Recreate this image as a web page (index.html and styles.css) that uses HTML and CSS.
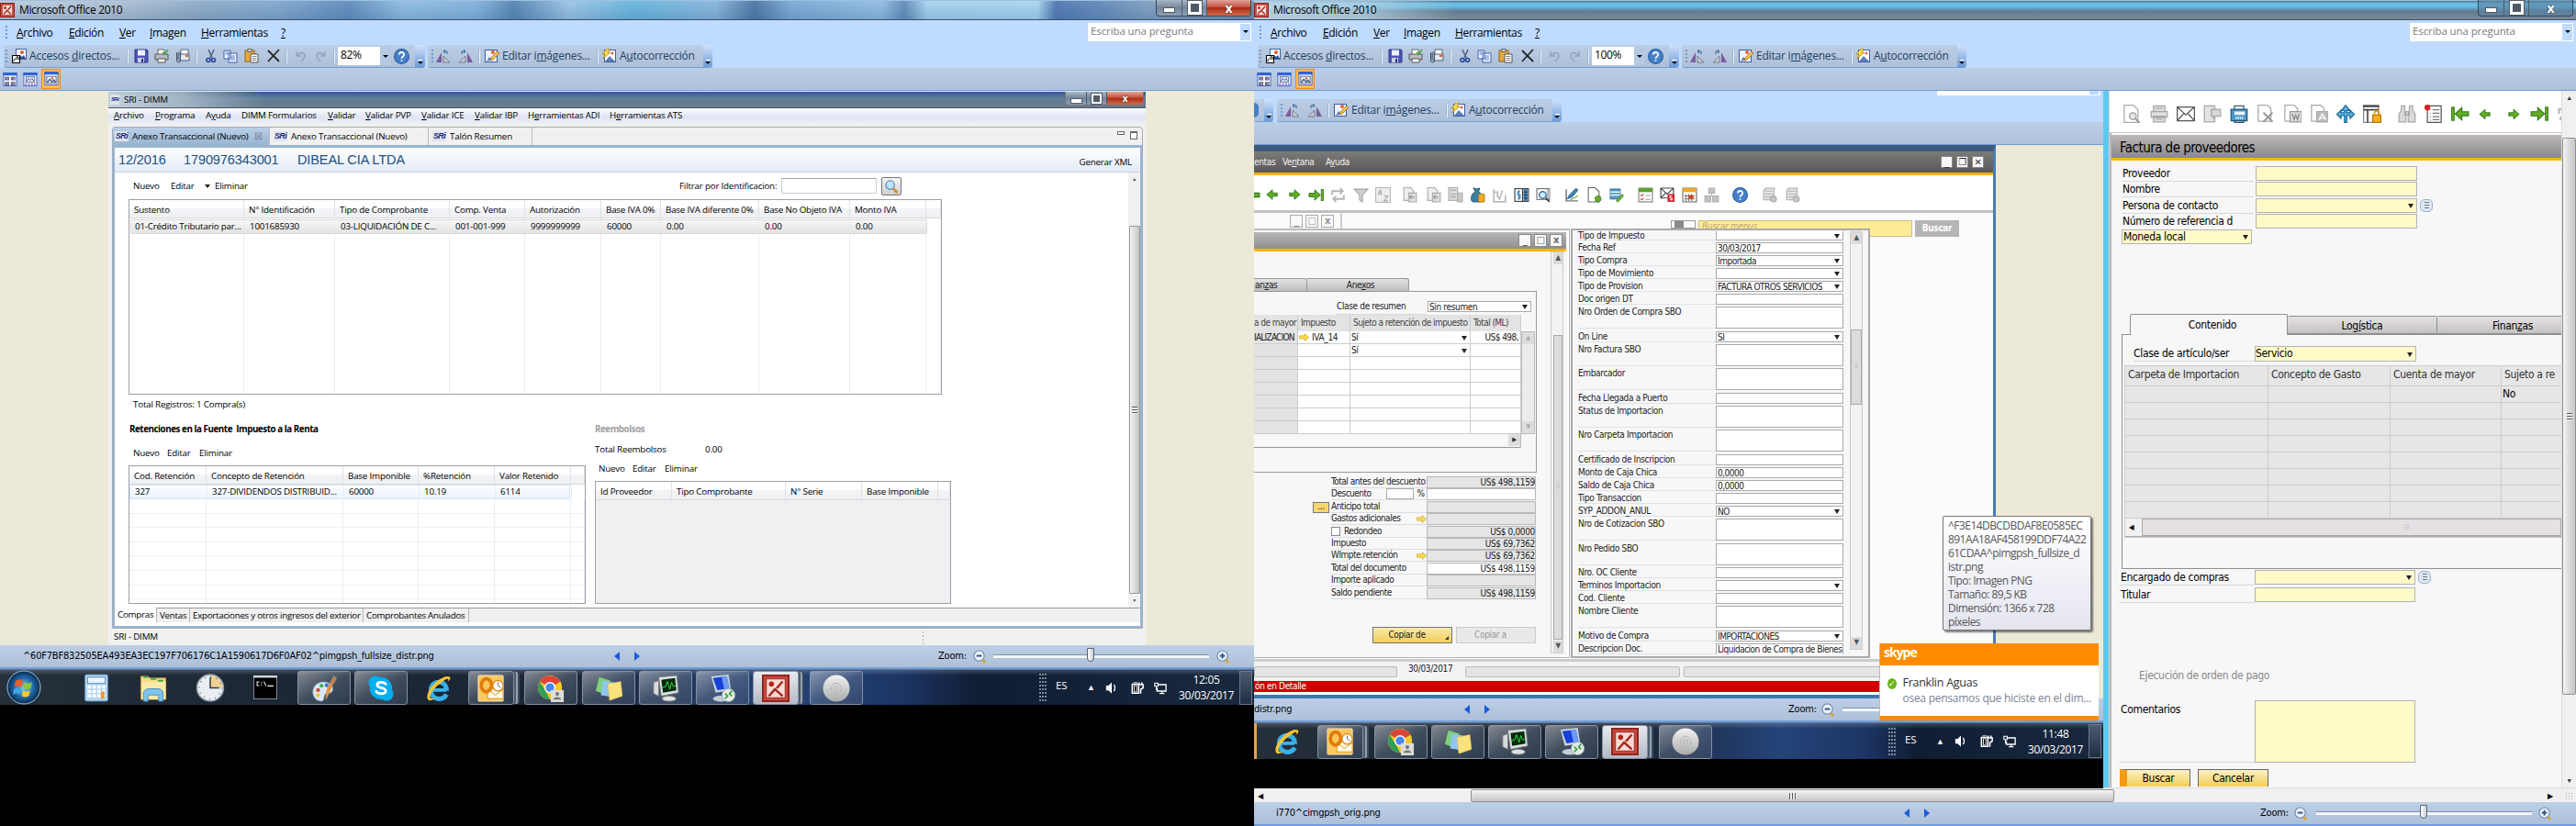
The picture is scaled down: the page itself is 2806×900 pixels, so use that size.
FILE: index.html
```html
<!DOCTYPE html>
<html lang="es">
<head>
<meta charset="utf-8">
<title>Microsoft Office 2010</title>
<link rel="stylesheet" href="styles.css">
</head>
<body>
<svg class="defs" width="0" height="0">
<defs>
<linearGradient id="gDisc" x1="0" y1="0" x2="0" y2="1"><stop offset="0" stop-color="#f2f2f2"/><stop offset="1" stop-color="#a9abab"/></linearGradient>
<radialGradient id="gOrb"><stop offset="0" stop-color="#7fd0f5"/><stop offset=".6" stop-color="#1f66a5"/><stop offset="1" stop-color="#0b2a4d"/></radialGradient>
<symbol id="app" viewBox="0 0 16 16"><rect x=".5" y=".5" width="15" height="15" fill="#c8493e" stroke="#8d241c"/><rect x="2.500" y="2.500" width="11" height="11" fill="#f7dcd6" stroke="#a5352b" stroke-width=".6"/><path d="M4 12.500l3.500-4 4.500 4M12 4L8.500 8" stroke="#a3261c" stroke-width="1.300" fill="none"/><circle cx="5.500" cy="5.500" r="1.500" fill="#b3261c"/></symbol>
<symbol id="short" viewBox="0 0 16 16"><rect x="4.500" y=".5" width="11" height="11" fill="#fff" stroke="#3d5fa3"/><circle cx="11" cy="4" r="2" fill="#e4562d"/><path d="M6 11l3-4 2 2 2-2 2 4z" fill="#31528e"/><rect x=".5" y="7.500" width="8" height="8" fill="#fff" stroke="#000"/><path d="M2 14c0-3 1-3 4-3M4.500 9H7v3" stroke="#000" fill="none"/></symbol>
<symbol id="save" viewBox="0 0 16 16"><path d="M1 1h13l1 1v13H1z" fill="#4a57b5" stroke="#2c3787"/><rect x="4" y="1.500" width="8" height="6" fill="#eef1fb"/><rect x="4" y="10" width="7" height="5" fill="#c9cfdf"/><rect x="8" y="11" width="2" height="4" fill="#2b357e"/></symbol>
<symbol id="print" viewBox="0 0 16 16"><path d="M4 1h7v6H4z" fill="#fff" stroke="#666"/><path d="M1 6h14v6H1z" fill="#b9bcc2" stroke="#555"/><path d="M4 11h8v4H4z" fill="#fff" stroke="#555"/><path d="M9 4l2 2 4-5" stroke="#3fa535" stroke-width="1.600" fill="none"/></symbol>
<symbol id="mail" viewBox="0 0 16 16"><path d="M6 1h8v11H6z" fill="#fff" stroke="#54627a"/><path d="M4 6h11v7H4z" fill="#dfe8f4" stroke="#54627a"/><path d="M1.500 4v9a2 2 0 004 0V5a1.300 1.300 0 00-2.500 0v7" stroke="#44516b" fill="none"/><rect x="11" y="7" width="3" height="2" fill="#d9652f"/></symbol>
<symbol id="cut" viewBox="0 0 16 16"><path d="M5 1l4 9M11 1l-4 9" stroke="#4f6181" stroke-width="1.500"/><circle cx="5" cy="12.500" r="2" fill="none" stroke="#24479b" stroke-width="1.600"/><circle cx="10.500" cy="12.500" r="2" fill="none" stroke="#24479b" stroke-width="1.600"/></symbol>
<symbol id="copy" viewBox="0 0 16 16"><path d="M1 2h7v9H1zM6 5h9v10H6z" fill="#f3f7ff" stroke="#3a5fae"/><path d="M2.500 4h4M2.500 6h3M8 8h5M8 10h5M8 12h5" stroke="#5b80c9"/></symbol>
<symbol id="paste" viewBox="0 0 16 16"><rect x="1" y="2" width="10" height="12" fill="#e7a93a" stroke="#8f651b"/><rect x="4" y=".5" width="4" height="3" fill="#dcdcdc" stroke="#666"/><path d="M7 6h8v9H7z" fill="#fff" stroke="#555"/><path d="M8.500 8.500h5M8.500 10.500h5M8.500 12.500h5" stroke="#888"/></symbol>
<symbol id="xx" viewBox="0 0 16 16"><path d="M2 2l12 12M14 1L2 14" stroke="#26282c" stroke-width="1.800"/></symbol>
<symbol id="undo" viewBox="0 0 16 16"><path d="M3 3v5h5M3 8c4-5 9-4 9 0 0 3-3 4-4 6" stroke="#95a5bb" stroke-width="1.600" fill="none"/></symbol>
<symbol id="redo" viewBox="0 0 16 16"><path d="M12 3v5H7M12 8C8 3 3 4 3 8c0 3 3 4 4 6" stroke="#95a5bb" stroke-width="1.600" fill="none"/></symbol>
<symbol id="help" viewBox="0 0 16 16"><circle cx="8" cy="8" r="7.500" fill="#4480c8" stroke="#2c5d9f"/><path d="M5.500 6.200C5.500 3 10.500 3 10.500 6c0 2-2.500 2-2.500 4.200M8 11.500v1.500" stroke="#fff" stroke-width="1.700" fill="none"/></symbol>
<symbol id="fv" viewBox="0 0 16 16"><path d="M6 4v11H0z" fill="#7a5c9f"/><path d="M8 8v7h7z" fill="#c9cbd6" stroke="#777d8d"/><path d="M8 3h4v3M10 1L8 3l2 2" stroke="#2d5c9b" fill="none"/></symbol>
<symbol id="fh" viewBox="0 0 16 16"><path d="M10 4v11h6z" fill="#7a5c9f"/><path d="M8 8v7H1z" fill="#c9cbd6" stroke="#777d8d"/><path d="M4 6V3h4M6 1l2 2-2 2" stroke="#2d5c9b" fill="none"/></symbol>
<symbol id="edit" viewBox="0 0 16 16"><rect x=".5" y="1.500" width="13" height="13" fill="#eef4ff" stroke="#3d5fa3"/><path d="M2 14l3-5 3 3" fill="#5e7fb8"/><circle cx="9" cy="4" r="2" fill="#e2622f"/><path d="M6 13l1-3 7-7 2 2-7 7z" fill="#f5c34d" stroke="#8a5b15" stroke-width=".7"/></symbol>
<symbol id="auto" viewBox="0 0 16 16"><rect x="2.500" y="1.500" width="12" height="13" fill="#fff" stroke="#3d5fa3"/><path d="M3 14l5-6 6 6z" fill="#5e7fb8"/><circle cx="11" cy="5" r="1.500" fill="#e2622f"/><path d="M5 0l3 0-2 4h3L1 11l2-5H0z" fill="#ffd84d" stroke="#a07a10" stroke-width=".7"/></symbol>
<symbol id="v1" viewBox="0 0 16 16"><rect x=".5" y=".5" width="15" height="15" fill="#fff" stroke="#3761c4"/><rect width="16" height="3.500" fill="#2f62d6"/><path d="M2 5h5v4H2zM9 5h5v4H9zM2 11h5v4H2zM9 11h5v4H9z" fill="#51658f"/><path d="M4 6h2v2H4zM11 6h2v2h-2zM4 12h2v2H4zM11 12h2v2h-2z" fill="#ea9070"/></symbol>
<symbol id="v2" viewBox="0 0 16 16"><rect x=".5" y=".5" width="15" height="15" fill="#fff" stroke="#3761c4"/><rect width="16" height="3.500" fill="#2f62d6"/><rect x="3" y="5" width="10" height="6" fill="#e9eefb" stroke="#51658f"/><path d="M4 10l2-3 2 2 2-2 2 3" stroke="#41557f" fill="none"/><path d="M2 13.500h12" stroke="#7b4cc0" stroke-width="2" stroke-dasharray="2 1.500"/></symbol>
<symbol id="v3" viewBox="0 0 16 16"><rect x=".5" y=".5" width="15" height="15" fill="#fff" stroke="#3761c4"/><rect width="16" height="3.500" fill="#2f62d6"/><rect x="2.500" y="5.500" width="11" height="8" fill="#e9eefb" stroke="#51658f"/><path d="M3 13l3-4 3 3 2-2 2 3" stroke="#41557f" fill="none" stroke-width="1.400"/><circle cx="9" cy="8" r="1.300" fill="#e2622f"/></symbol>
<symbol id="mag" viewBox="0 0 16 16"><circle cx="6.500" cy="6" r="5" fill="#bfe4fa" stroke="#5489b5" stroke-width="1.300"/><path d="M10 10l5 5" stroke="#d58a2f" stroke-width="3"/></symbol>
<symbol id="zm" viewBox="0 0 16 16"><circle cx="7" cy="7" r="6" fill="#eaf2fb" stroke="#6f87a8" stroke-width="1.200"/><path d="M4 7h6" stroke="#2b4f80" stroke-width="2"/><path d="M11 12l3 3" stroke="#d8a53a" stroke-width="3"/></symbol>
<symbol id="zp" viewBox="0 0 16 16"><circle cx="7" cy="7" r="6" fill="#eaf2fb" stroke="#6f87a8" stroke-width="1.200"/><path d="M4 7h6M7 4v6" stroke="#2b4f80" stroke-width="2"/><path d="M11 12l3 3" stroke="#d8a53a" stroke-width="3"/></symbol>
<symbol id="orb" viewBox="0 0 38 38"><circle cx="19" cy="19" r="18" fill="url(#gOrb)" stroke="#9cc4df"/><path d="M10 12c3-2 5-2 8 0l-1.500 7c-3-2-5-2-8 0z" fill="#ea5a28"/><path d="M20 13c3 2 5 2 8 0l-1.500 6.500c-3 2-5 2-8 0z" fill="#8bc53f"/><path d="M8 21c3-2 5-2 8 0l-1.500 6c-3-2-5-2-7.500 0z" fill="#3ea7e5"/><path d="M18 22c3 2 5 2 8 0l-1.500 6c-3 2-5 2-8 0z" fill="#fdca2e"/></symbol>
<symbol id="calc" viewBox="0 0 32 32"><rect x="3" y="1" width="26" height="30" rx="2" fill="#b6d6ef" stroke="#4b7fae"/><rect x="6" y="4" width="20" height="7" fill="#e9f5fd" stroke="#5d8cb5"/><path d="M6 15h20M6 20h20M6 25h20" stroke="#fff" stroke-width="3.500" stroke-dasharray="4 1.500"/><path d="M23 20v8" stroke="#ee9a2f" stroke-width="4"/></symbol>
<symbol id="folder" viewBox="0 0 32 32"><path d="M2 3h8l2 2h18v24H2z" fill="#f7dc85" stroke="#b9963d"/><path d="M3 9h27v20H3z" fill="#fbe9a8"/><path d="M5 4h5M13 6h6M21 8h6" stroke="#3ba64a" stroke-width="2"/><path d="M5 31V22c0-3 3-5 6-5h10c3 0 6 2 6 5v9h-5v-7H10v7z" fill="#7fc4ee" stroke="#468fbf"/></symbol>
<symbol id="clk" viewBox="0 0 32 32"><circle cx="16" cy="16" r="15" fill="#e9eef3" stroke="#8b98a5" stroke-width="1.500"/><path d="M16 16V2a14 14 0 0114 14z" fill="#f2cf92"/><path d="M16 4v12h10" stroke="#33404e" stroke-width="1.600" fill="none"/><circle cx="16" cy="16" r="12.500" fill="none" stroke="#5d6b79" stroke-width="1.500" stroke-dasharray="1 5.540"/></symbol>
<symbol id="cmd" viewBox="0 0 32 32"><rect x=".5" y=".5" width="31" height="31" fill="#000" stroke="#9aa4b0"/><rect width="32" height="3" fill="#cfd6de"/><path d="M8 8.500H5v5h3M11 9v1.500M11 12v1.500M14 8l3 6M19 14h8" stroke="#f4f4f4" stroke-width="1.300" fill="none"/></symbol>
<symbol id="paint" viewBox="0 0 32 32"><path d="M3 20c0-8 8-13 16-11 6 2 9 7 6 11-2 3-6 0-8 3-2 4 0 7-4 8C7 31 3 26 3 20z" fill="#dbe9f6" stroke="#7ea1c0"/><circle cx="9" cy="18" r="2.300" fill="#e03f32"/><circle cx="13" cy="13" r="2.300" fill="#4bb04a"/><circle cx="19" cy="12.500" r="2.300" fill="#3574d4"/><circle cx="9" cy="24" r="2.300" fill="#f2c230"/><path d="M27 1l4 3-5 9-4-2z" fill="#b58557"/><path d="M22 11l4 2-8 17c0-5-1-9 4-19z" fill="#e8913c"/></symbol>
<symbol id="skype" viewBox="0 0 32 32"><circle cx="16" cy="16" r="13" fill="#00aff0"/><circle cx="9.500" cy="9.500" r="8" fill="#00aff0"/><circle cx="22.500" cy="22.500" r="8" fill="#00aff0"/><path d="M21.500 11c-1.500-2.500-10-3-10 1 0 4.500 10 2 10 7 0 4.500-9.500 4-11 .5" stroke="#fff" stroke-width="3" fill="none" stroke-linecap="round"/></symbol>
<symbol id="ie" viewBox="0 0 32 32"><path d="M8.500 18h17" stroke="#38b5ee" stroke-width="4"/><path d="M26 23c-4 8-18 7-18-5S26 5 26 19" stroke="#35b0ea" stroke-width="5.500" fill="none"/><path d="M30 3c-5-4-20 6-25 17-2 5-2 9 1 10 3 0 6-1 8-3-13 5-6-9 4-16C25 5 29 3 28 8c1-1 3-3 2-5z" fill="#f6c433"/></symbol>
<symbol id="outlook" viewBox="0 0 32 32"><rect x="1" y="1" width="29" height="30" rx="1" fill="#f9c860" stroke="#fbe6b5"/><path d="M12 16h18v12H12z" fill="#fff8e4" stroke="#d9961e"/><path d="M12 17l9 7 9-7" stroke="#d9961e" fill="none"/><ellipse cx="10.500" cy="12.500" rx="6" ry="7.500" fill="none" stroke="#e07b09" stroke-width="4"/><circle cx="24" cy="13" r="6" fill="#fff" stroke="#e08e1a" stroke-width="1.500"/><path d="M24 9v4l3 2" stroke="#666" fill="none"/></symbol>
<symbol id="chrome" viewBox="0 0 32 32"><circle cx="15" cy="15" r="14" fill="#f7c927"/><path d="M15 15L3 8a14 14 0 0124 0z" fill="#dc4437"/><path d="M27 8H15v7z" fill="#dc4437"/><path d="M3 8l8 13 4 8A14 14 0 013 8z" fill="#2f9e57"/><circle cx="15" cy="15" r="6.500" fill="#fff"/><circle cx="15" cy="15" r="5" fill="#4688ee"/><rect x="16" y="18" width="15" height="14" fill="#dcdcdc"/><circle cx="23.500" cy="22.500" r="2.200" fill="#777"/><path d="M19 29c0-4 9-4 9 0z" fill="#777"/></symbol>
<symbol id="notes" viewBox="0 0 32 32"><path d="M5 3l13 4-4 17L1 19z" fill="#7ed07a"/><path d="M9 7l13 2-2 17-13-2z" fill="#8fc5ee"/><path d="M15 11l15-3 2 17-15 5z" fill="#fbe27c" stroke="#d8b84b" stroke-width=".5"/></symbol>
<symbol id="tm" viewBox="0 0 32 32"><path d="M2 9l6-2v18l-6-3z" fill="#d9dcde" stroke="#777"/><path d="M8 3l21-2 2 20-20 4z" fill="#dfe3e4" stroke="#7c8184"/><path d="M11 6l16-2 1.500 14.500L13 21z" fill="#052a09"/><path d="M12 15l4-1 2-6 3 9 2-8 2 5 3-1" stroke="#3be04b" fill="none"/><ellipse cx="20" cy="28" rx="8" ry="3" fill="#dfe3e4" stroke="#888"/></symbol>
<symbol id="rdp" viewBox="0 0 32 32"><path d="M3 2l20-2 3 18-18 3z" fill="#c8d4de"/><path d="M5 4l16-2 3 14-14 2z" fill="#1740d8"/><path d="M15 3l6-1 3 14-6 1z" fill="#6b9bf5"/><ellipse cx="14" cy="28" rx="9" ry="3.500" fill="#c3cdd6"/><circle cx="23" cy="24" r="7.500" fill="#e5ebe8" stroke="#9aa"/><path d="M19 22l3 3-3 3M27 19l-3 3 3 3" stroke="#31a33b" stroke-width="1.800" fill="none"/></symbol>
<symbol id="disc" viewBox="0 0 32 32"><circle cx="16" cy="16" r="15.500" fill="url(#gDisc)"/><circle cx="16" cy="16" r="6" fill="none" stroke="#b4b4b4"/><circle cx="16" cy="16" r="2.500" fill="none" stroke="#b4b4b4"/></symbol>
<symbol id="vol" viewBox="0 0 16 16"><path d="M1 5h3l4-4v14l-4-4H1z" fill="#fff"/><path d="M10.500 4c2 2 2 6 0 8" stroke="#fff" stroke-width="1.500" fill="none"/></symbol>
<symbol id="bat" viewBox="0 0 16 16"><path d="M1.500 3.500h8v11h-8z" fill="none" stroke="#fff" stroke-width="1.700"/><path d="M3 1.500h5M4 5h3v8H4z" stroke="#fff"/><path d="M9 4h6v4l-3 2v5M10 1v3M13.500 1v3" stroke="#fff" stroke-width="1.800" fill="none"/></symbol>
<symbol id="net" viewBox="0 0 16 16"><path d="M5 4h10v8H4V8M7 15h6M10 12v3" fill="none" stroke="#fff" stroke-width="1.500"/><path d="M1 2h4v4H1zM3 6v5" stroke="#fff" stroke-width="1.300" fill="none"/></symbol>
<symbol id="ga" viewBox="0 0 16 16"><path d="M1 8l7-6v4h6v4H8v4z" fill="#5fae24" stroke="#35751a"/></symbol>
<symbol id="gb" viewBox="0 0 16 16"><path d="M15 8L8 2v4H2v4h6v4z" fill="#5fae24" stroke="#35751a"/></symbol>
<symbol id="gl" viewBox="0 0 18 16"><path d="M14 8L7.500 2v4H1v4h6.500v4z" fill="#5fae24" stroke="#35751a"/><rect x="15" y="1.500" width="2.500" height="13" fill="#5fae24" stroke="#35751a" stroke-width=".8"/></symbol>
<symbol id="gf" viewBox="0 0 18 16"><path d="M4 8l6.500-6v4H17v4h-6.500v4z" fill="#5fae24" stroke="#35751a"/><rect x=".5" y="1.500" width="2.500" height="13" fill="#5fae24" stroke="#35751a" stroke-width=".8"/></symbol>
<symbol id="loop" viewBox="0 0 16 16"><path d="M2 8V4h10M10 1l3 3-3 3M14 8v4H4M6 9l-3 3 3 3" stroke="#b4b4b4" stroke-width="1.700" fill="none"/></symbol>
<symbol id="filt" viewBox="0 0 16 16"><path d="M1 2h14L9.500 8v7l-3-2V8z" fill="#cfcfcf" stroke="#a4a4a4"/></symbol>
<symbol id="az" viewBox="0 0 16 16"><rect x=".5" y=".5" width="15" height="15" fill="#eee" stroke="#bbb"/><path d="M3 8l2-5 2 5M4 6.500h2M9 9h4l-4 5h4" stroke="#a4a4a4" fill="none"/></symbol>
<symbol id="gd" viewBox="0 0 16 16"><path d="M2 .5h7l3 3v10H2z" fill="#eee" stroke="#aaa"/><path d="M7 6h8v9H7z" fill="#ddd" stroke="#aaa"/><path d="M13 10H8l2-2M8 10l2 2" stroke="#999" fill="none"/></symbol>
<symbol id="gcalc" viewBox="0 0 16 16"><rect x="1" y=".5" width="9" height="13" fill="#ddd" stroke="#aaa"/><path d="M3 3h5M3 7h5M3 10h5" stroke="#999" stroke-width="1.500" stroke-dasharray="1.200 .7"/><rect x="10" y="6" width="5" height="9" fill="#c9c9c9" stroke="#aaa"/></symbol>
<symbol id="bag" viewBox="0 0 16 16"><path d="M4 1l3 1 3-1-1 4c4 2 5 9 1 10H4c-4-1-3-8 2-10z" fill="#3c81a8" stroke="#2a617f"/><rect x="9" y="7" width="6" height="8" rx="1" fill="#f5ad23" stroke="#b97c0e"/></symbol>
<symbol id="bal" viewBox="0 0 16 16"><path d="M2 2v13h12V8M5 8l3 4 3-9M2 5h4v4" stroke="#bcbcbc" stroke-width="1.600" fill="none"/></symbol>
<symbol id="ledger" viewBox="0 0 16 16"><rect x="1" y="1.500" width="14" height="13" fill="#fff" stroke="#333"/><path d="M10 2h4v12h-4z" fill="#2d7fc0"/><path d="M9 1v14M10 5h4M10 8h4M10 11h4" stroke="#333"/><path d="M6.500 4.500H4V8h2.500v3.500H4M5.200 3v10" stroke="#2d7fc0" fill="none"/></symbol>
<symbol id="lmag" viewBox="0 0 16 16"><rect x="1" y="1.500" width="13" height="11" fill="#fff" stroke="#666"/><path d="M11 2h3v10h-3z" fill="#b8bcc0"/><circle cx="7" cy="8" r="3.500" fill="#d6ecfa" stroke="#2d6f9f" stroke-width="1.300"/><path d="M10 11l4 4" stroke="#444" stroke-width="1.800"/></symbol>
<symbol id="pen" viewBox="0 0 16 16"><path d="M2 2v12h12" stroke="#777" fill="none" stroke-width="1.400"/><path d="M3 12l2-4 7-7 2 2-6 7z" fill="#3b86ba" stroke="#1f5678" stroke-width=".7"/><path d="M6 13l8-4" stroke="#66a833"/></symbol>
<symbol id="newd" viewBox="0 0 16 16"><path d="M2 .5h7l4 4v10.500H2z" fill="#fff" stroke="#666"/><circle cx="12" cy="12" r="3" fill="#62aa2c" stroke="#3c7a16" stroke-dasharray="2 1"/></symbol>
<symbol id="db" viewBox="0 0 16 16"><path d="M2 2h10v10H2z" fill="#5c9dca" stroke="#2f6d98"/><path d="M2 5h10M2 8h10" stroke="#e6f1f8" stroke-width="1.300"/><path d="M8 14l6-7 1.500 2L10 15z" fill="#72b33a" stroke="#3c7a16" stroke-width=".7"/></symbol>
<symbol id="chk" viewBox="0 0 16 16"><rect x="1" y="1" width="14" height="14" fill="#fff" stroke="#777"/><path d="M1 1h14v4H1z" fill="#5da12b"/><path d="M3 8l1 1 2-2M3 12l1 1 2-2" stroke="#d13030" fill="none"/><path d="M8 8.500h5M8 12.500h5" stroke="#999"/></symbol>
<symbol id="env" viewBox="0 0 16 16"><path d="M.5 2h15v12H.5zM.5 2L8 9l7.500-7M.5 14l5.500-6M15.500 14L10 8" fill="#fff" stroke="#555"/></symbol>
<symbol id="envr" viewBox="0 0 16 16"><path d="M1 1h13v10H1zM1 1l6.500 6L14 1M1 11l5-5" fill="#fff" stroke="#444"/><rect x="8" y="7" width="7" height="8" fill="#cf2027"/><path d="M12.500 9h-2v2h2v2h-2" stroke="#fff" fill="none"/></symbol>
<symbol id="cal" viewBox="0 0 16 16"><rect x="1" y="1" width="14" height="14" fill="#fff" stroke="#666"/><path d="M1 1h14v4H1z" fill="#f0a823"/><path d="M4 7v7M7 7v7M10 7v7M3 9h10M3 12h10" stroke="#777"/><path d="M7 8h5v4H7z" fill="#d04a22"/></symbol>
<symbol id="org" viewBox="0 0 16 16"><path d="M5 1h6v5H5zM1 9h6v6H1zM9 9h6v6H9zM8 6v3" fill="#c2c2c2" stroke="#b0b0b0"/></symbol>
<symbol id="srv" viewBox="0 0 16 16"><path d="M4 1h9l-1 12H2V4z" fill="#e3e3e3" stroke="#a9a9a9"/><path d="M3.500 4h8M3.500 7h8M3.500 10h8" stroke="#b5b5b5"/><circle cx="12" cy="12" r="3" fill="#c5c5c5" stroke="#aaa"/></symbol>
<symbol id="prev" viewBox="0 0 16 16"><path d="M1.500 .5h8l4 4v11h-12z" fill="#fff" stroke="#aaa"/><circle cx="9" cy="10" r="3" fill="#e6e6e6" stroke="#999"/><path d="M11 12l4 4" stroke="#999" stroke-width="1.600"/></symbol>
<symbol id="gpr" viewBox="0 0 16 16"><path d="M3 1h10v5H3zM1 6h14v5H1zM3 10h10v5H3z" fill="#dedede" stroke="#a5a5a5"/><path d="M5 3h6M5 12.500h6" stroke="#aaa"/></symbol>
<symbol id="sms" viewBox="0 0 16 16"><rect x="1" y="1" width="9" height="14" fill="#e3e3e3" stroke="#a5a5a5"/><path d="M7 4h8v6h-4l-2 2v-2H7z" fill="#d6d6d6" stroke="#a5a5a5"/></symbol>
<symbol id="fax" viewBox="0 0 16 16"><path d="M4 1h8v4H4z" fill="#fff" stroke="#3c5a6c"/><path d="M1 4h14v10H1z" fill="#4a96c4" stroke="#22587b"/><path d="M4 6h9v3H4z" fill="#e5f2fa"/><path d="M5 11.500h7" stroke="#fff" stroke-width="2" stroke-dasharray="1 .8"/><path d="M4 14h8v1.500H4z" fill="#fff" stroke="#22587b"/></symbol>
<symbol id="gx" viewBox="0 0 16 16"><path d="M1.500 .5h8l3 3v11h-11z" fill="#fff" stroke="#aaa"/><path d="M6 7l8 8M14 7l-8 8" stroke="#999" stroke-width="1.600"/></symbol>
<symbol id="gw" viewBox="0 0 16 16"><path d="M1.500 .5h8l3 3v11h-11z" fill="#fff" stroke="#aaa"/><path d="M6 6h10v9H6z" fill="#ddd" stroke="#999"/><path d="M8 8l1.500 5L11 9l1.500 4L14 8" stroke="#888" fill="none"/></symbol>
<symbol id="gp" viewBox="0 0 16 16"><path d="M1.500 .5h8l3 3v11h-11z" fill="#fff" stroke="#aaa"/><path d="M6 6h10v9H6z" fill="#bbb" stroke="#aaa"/><path d="M8 13l3-5 3 5c-2-2-4-2-6 0z" stroke="#fff" fill="none"/></symbol>
<symbol id="move" viewBox="0 0 16 16"><path d="M8 .5L4.500 5H7v2H4V5L.5 8.500 4 12V9.500h3V15.500h2V9.500h3V12l3.500-3.500L12 5v2H9V5h2.500z" fill="#5eb5e2" stroke="#1d6a98"/></symbol>
<symbol id="lock" viewBox="0 0 16 16"><path d="M.5 .5h13v15H.5z" fill="#fff" stroke="#888"/><path d="M0 1.500h14M.5 4.500h13M4 4.500v11" fill="none" stroke="#444" stroke-width="1.300"/><rect x="8.500" y="9" width="7" height="6.500" fill="#f6b01f" stroke="#b47a08"/><path d="M10 9V7.500a2 2 0 014 0V9" stroke="#e39a14" stroke-width="1.300" fill="none"/></symbol>
<symbol id="bino" viewBox="0 0 16 16"><path d="M3 1h3v4l1 3v7H1V8l2-3zM10 1h3v4l2 3v7H9V8l1-3zM6 6h4v3H6z" fill="#dadada" stroke="#a8a8a8"/></symbol>
<symbol id="form" viewBox="0 0 16 16"><path d="M2.500 1h12v14.500h-12z" fill="#fff" stroke="#555"/><path d="M7 4.500h6M7 7.500h6M7 10.500h6M7 13h6" stroke="#777"/><path d="M5 4v10" stroke="#888" stroke-dasharray="1 2"/><circle cx="2.500" cy="2.500" r="2.500" fill="#d81e1e"/></symbol>
<symbol id="ya" viewBox="0 0 12 10"><path d="M11.500 5L7 .8v2.400H.6v3.600H7v2.400z" fill="#ffe14d" stroke="#c9a018" stroke-width=".8"/></symbol>
</defs>
</svg>

<div class="screen one">
  <header class="title t1">
    <svg class="s16"><use href="#app"/></svg><span>Microsoft Office 2010</span>
    <div class="wbtns red"><i class="mn"></i><i class="mx"></i><i class="cl">x</i></div>
  </header>
  <nav class="menu"><i class="grip"></i><span><u>A</u>rchivo</span><span><u>E</u>dición</span><span><u>V</u>er</span><span><u>I</u>magen</span><span><u>H</u>erramientas</span><span><u>?</u></span>
    <div class="ask"><span>Escriba una pregunta</span><b></b></div></nav>
  <div class="bars">
    <div class="bar a"><i class="grip"></i><svg><use href="#short"/></svg><span>Accesos <u>d</u>irectos...</span><i class="sep"></i><svg><use href="#save"/></svg><svg><use href="#print"/></svg><svg><use href="#mail"/></svg><i class="sep"></i><svg><use href="#cut"/></svg><svg><use href="#copy"/></svg><svg><use href="#paste"/></svg><svg><use href="#xx"/></svg><i class="sep"></i><svg><use href="#undo"/></svg><svg><use href="#redo"/></svg><i class="sep"></i><div class="zoombox"><span>82%</span><b></b></div><svg class="hp"><use href="#help"/></svg><i class="end"></i></div>
    <div class="bar b"><i class="grip"></i><svg><use href="#fv"/></svg><svg><use href="#fh"/></svg><i class="sep"></i><svg><use href="#edit"/></svg><span>Editar i<u>m</u>ágenes...</span><i class="sep"></i><svg><use href="#auto"/></svg><span>A<u>u</u>tocorrección</span><i class="end"></i></div>
  </div>
  <div class="views"><svg><use href="#v1"/></svg><svg><use href="#v2"/></svg><b><svg><use href="#v3"/></svg></b></div>
  <main class="canvas">
    <section class="dimm">
      <div class="dtitle"><i class="sri">SRi</i><span>SRI - DIMM</span><div class="wbtns red small"><i class="mn"></i><i class="mx"></i><i class="cl">x</i></div></div>
      <div class="dmenu"><span><u>A</u>rchivo</span><span><u>P</u>rograma</span><span>A<u>y</u>uda</span><span>DIMM Formularios</span><span><u>V</u>alidar</span><span><u>V</u>alidar PVP</span><span><u>V</u>alidar ICE</span><span><u>V</u>alidar IBP</span><span>H<u>e</u>rramientas ADI</span><span>H<u>e</u>rramientas ATS</span></div>
      <div class="dbody">
        <div class="dtabs"><div class="on"><i class="sri">SRi</i><span>Anexo Transaccional (Nuevo)</span><em>☒</em></div><div><i class="sri">SRi</i><span>Anexo Transaccional (Nuevo)</span></div><div><i class="sri">SRi</i><span>Talón Resumen</span></div><p><i></i><i></i></p></div>
        <div class="dinner">
          <div class="dhead"><span>12/2016</span><span>1790976343001</span><span>DIBEAL CIA LTDA</span><em>Generar XML</em></div>
          <div class="dscroll">
            <div class="dmain">
              <div class="tools1"><span>Nuevo</span><span>Editar</span><i></i><span>Eliminar</span><span class="fl">Filtrar por Identificacion:</span><b class="fin"></b><b class="fbt"><svg width="16" height="15"><use href="#mag"/></svg></b></div>
              <div class="tbl k1">
                <div class="th"><span>Sustento</span><span>N° Identificación</span><span>Tipo de Comprobante</span><span>Comp. Venta</span><span>Autorización</span><span>Base IVA 0%</span><span>Base IVA diferente 0%</span><span>Base No Objeto IVA</span><span>Monto IVA</span><span></span></div>
                <div class="tr sel"><span>01-Crédito Tributario par...</span><span>1001685930</span><span>03-LIQUIDACIÓN DE C...</span><span>001-001-999</span><span>9999999999</span><span>60000</span><span>0.00</span><span>0.00</span><span>0.00</span></div>
                <div class="tr fill"><span></span><span></span><span></span><span></span><span></span><span></span><span></span><span></span><span></span><span></span></div>
              </div>
              <div class="total">Total Registros: 1 Compra(s)</div>
              <div class="split">
                <div class="colL">
                  <h4>Retenciones en la Fuente&nbsp; Impuesto a la Renta</h4>
                  <div class="tools2"><span>Nuevo</span><span>Editar</span><span>Eliminar</span></div>
                  <div class="tbl k2">
                    <div class="th"><span>Cod. Retención</span><span>Concepto de Retención</span><span>Base Imponible</span><span>%Retención</span><span>Valor Retenido</span><span></span></div>
                    <div class="tr sel2"><span>327</span><span>327-DIVIDENDOS DISTRIBUID...</span><span>60000</span><span>10.19</span><span>6114</span></div>
                    <div class="tr fill lines"><span></span><span></span><span></span><span></span><span></span><span></span></div>
                  </div>
                </div>
                <div class="colR">
                  <h4 class="dim">Reembolsos</h4>
                  <div class="treem"><span>Total Reembolsos</span><span>0.00</span></div>
                  <div class="tools2 r"><span>Nuevo</span><span>Editar</span><span>Eliminar</span></div>
                  <div class="tbl k3">
                    <div class="th"><span>Id Proveedor</span><span>Tipo Comprobante</span><span>N° Serie</span><span>Base Imponible</span><span></span></div>
                    <div class="tr fill"><span></span><span></span><span></span><span></span><span></span></div>
                  </div>
                </div>
              </div>
            </div>
            <div class="vs"><em>▲</em><b><i></i></b><em>▼</em></div>
          </div>
          <div class="btabs"><span class="on">Compras</span><span>Ventas</span><span>Exportaciones y otros ingresos del exterior</span><span>Comprobantes Anulados</span></div>
        </div>
      </div>
      <div class="dstat"><span>SRI - DIMM</span><i></i></div>
    </section>
  </main>
  <footer class="status s1"><span>^60F7BF832505EA493EA3EC197F706176C1A1590617D6F0AF02^pimgpsh_fullsize_distr.png</span><i class="pa l"></i><i class="pa r"></i><span>Zoom:</span><svg><use href="#zm"/></svg><div class="slider"><b></b></div><svg><use href="#zp"/></svg></footer>
  <div class="taskbar">
    <div class="start"><svg width="38" height="38"><use href="#orb"/></svg><svg><use href="#calc"/></svg><svg><use href="#folder"/></svg><svg><use href="#clk"/></svg><svg><use href="#cmd"/></svg></div>
    <div class="apps"><b><svg><use href="#paint"/></svg></b><b><svg><use href="#skype"/></svg></b><b class="no"><svg><use href="#ie"/></svg></b><b class="st"><svg><use href="#outlook"/></svg></b><b><svg><use href="#chrome"/></svg></b><b><svg><use href="#notes"/></svg></b><b><svg><use href="#tm"/></svg></b><b><svg><use href="#rdp"/></svg></b><b class="st lit"><svg><use href="#app"/></svg></b><b><svg><use href="#disc"/></svg></b></div>
    <div class="tray"><i class="dots"></i><span>ES</span><em>▲</em><svg><use href="#vol"/></svg><svg><use href="#bat"/></svg><svg><use href="#net"/></svg><p>12:05<br>30/03/2017</p><i class="peek"></i></div>
  </div>
</div>

<div class="screen two">
  <header class="title t2">
    <svg class="s16"><use href="#app"/></svg><span>Microsoft Office 2010</span>
    <div class="wbtns"><i class="mn"></i><i class="mx"></i><i class="cl">x</i></div>
  </header>
  <nav class="menu"><i class="grip"></i><span><u>A</u>rchivo</span><span><u>E</u>dición</span><span><u>V</u>er</span><span><u>I</u>magen</span><span><u>H</u>erramientas</span><span><u>?</u></span>
    <div class="ask"><span>Escriba una pregunta</span><b></b></div></nav>
  <div class="bars">
    <div class="bar a"><i class="grip"></i><svg><use href="#short"/></svg><span>Accesos <u>d</u>irectos...</span><i class="sep"></i><svg><use href="#save"/></svg><svg><use href="#print"/></svg><svg><use href="#mail"/></svg><i class="sep"></i><svg><use href="#cut"/></svg><svg><use href="#copy"/></svg><svg><use href="#paste"/></svg><svg><use href="#xx"/></svg><i class="sep"></i><svg><use href="#undo"/></svg><svg><use href="#redo"/></svg><i class="sep"></i><div class="zoombox"><span>100%</span><b></b></div><svg class="hp"><use href="#help"/></svg><i class="end"></i></div>
    <div class="bar b"><i class="grip"></i><svg><use href="#fv"/></svg><svg><use href="#fh"/></svg><i class="sep"></i><svg><use href="#edit"/></svg><span>Editar i<u>m</u>ágenes...</span><i class="sep"></i><svg><use href="#auto"/></svg><span>A<u>u</u>tocorrección</span><i class="end"></i></div>
  </div>
  <div class="views"><svg><use href="#v1"/></svg><svg><use href="#v2"/></svg><b><svg><use href="#v3"/></svg></b></div>
  <div class="viewer">
    <section class="shot">
      <div class="strip"><div class="bar c"><i class="halfhelp"></i><i class="end"></i></div><div class="bar b"><i class="grip"></i><svg><use href="#fv"/></svg><svg><use href="#fh"/></svg><i class="sep"></i><svg><use href="#edit"/></svg><span>Editar i<u>m</u>ágenes...</span><i class="sep"></i><svg><use href="#auto"/></svg><span>A<u>u</u>tocorrección</span><i class="end"></i></div><div class="askcut"><b></b></div></div>
      <div class="views empty"></div>
      <div class="sapwrap">
        <div class="sap">
          <div class="sapmenu"><span>entas</span><span>Ve<u>n</u>tana</span><span>A<u>y</u>uda</span><div class="sq dark"><i>_</i><i>❐</i><i>✕</i></div></div>
          <div class="saptools"><svg><use href="#ga"/></svg><svg><use href="#ga"/></svg><svg><use href="#gb"/></svg><svg><use href="#gl"/></svg><svg><use href="#loop"/></svg><svg><use href="#filt"/></svg><svg><use href="#az"/></svg><svg><use href="#gd"/></svg><svg><use href="#gd"/></svg><svg><use href="#gcalc"/></svg><svg><use href="#bag"/></svg><svg><use href="#bal"/></svg><svg><use href="#ledger"/></svg><svg><use href="#lmag"/></svg><svg><use href="#pen"/></svg><svg><use href="#newd"/></svg><svg><use href="#db"/></svg><svg><use href="#chk"/></svg><svg><use href="#envr"/></svg><svg><use href="#cal"/></svg><svg><use href="#org"/></svg><svg><use href="#help"/></svg><svg><use href="#srv"/></svg><svg><use href="#srv"/></svg></div>
          <div class="desk">
            <div class="ghost"><div class="sq"><i>_</i><i>□</i><i>x</i></div></div>
            <div class="find"><i></i><span>Buscar menus</span><b>Buscar</b></div>
            <div class="win w1">
              <div class="wt"><div class="sq"><i>_</i><i>□</i><i>x</i></div></div>
              <div class="wb">
                <div class="wmain">
                  <div class="wtabs"><span>an<u>z</u>as</span><span>Ane<u>x</u>os</span></div>
                  <div class="wpanel">
                    <div class="clase"><span>Clase de resumen</span><b class="dd">Sin resumen</b></div>
                    <div class="gridrow">
                      <div class="gt">
                        <div class="gh"><span>a de mayor</span><span>Impuesto</span><span>Sujeto a retención de impuesto</span><span>Total (ML)</span></div>
                        <div class="gr"><span>IALIZACION</span><span><svg><use href="#ya"/></svg>IVA_14</span><span class="ddn">Sí</span><span class="rt">US$ 498,</span></div>
                        <div class="gr"><span></span><span></span><span class="ddn">Sí</span><span></span></div>
                        <div class="gr"><span></span><span></span><span></span><span></span></div><div class="gr"><span></span><span></span><span></span><span></span></div><div class="gr"><span></span><span></span><span></span><span></span></div><div class="gr"><span></span><span></span><span></span><span></span></div><div class="gr"><span></span><span></span><span></span><span></span></div><div class="gr"><span></span><span></span><span></span><span></span></div>
                        <div class="gs"><b>▶</b></div>
                      </div>
                      <div class="gvs"><b>▲</b><b>▼</b></div>
                    </div>
                  </div>
                  <div class="totals">
                    <div><span>Total antes del descuento</span><b>US$ 498,1159</b></div>
                    <div><span>Descuento<i class="pct"></i>%</span><b class="w"></b></div>
                    <div><i class="more">...</i><span>Anticipo total</span><b></b></div>
                    <div><span>Gastos adicionales<svg><use href="#ya"/></svg></span><b></b></div>
                    <div><span><i class="cb"></i>Redondeo</span><b>US$ 0,0000</b></div>
                    <div><span>Impuesto</span><b>US$ 69,7362</b></div>
                    <div><span>WImpte.retención<svg><use href="#ya"/></svg></span><b>US$ 69,7362</b></div>
                    <div><span>Total del documento</span><b class="w">US$ 498,1159</b></div>
                    <div><span>Importe aplicado</span><b></b></div>
                    <div><span>Saldo pendiente</span><b>US$ 498,1159</b></div>
                  </div>
                  <div class="wbt"><b>Copiar de<i></i></b><b class="off">Copiar a</b></div>
                </div>
                <div class="svs a"><em>▲</em><b>⠿</b><em>▼</em></div>
              </div>
            </div>
            <div class="win w2">
              <div class="udf">
                <div class="first"><span>Tipo de Impuesto</span><b class="dd"></b></div>
                <div><span>Fecha Ref</span><b>30/03/2017</b></div>
                <div><span>Tipo Compra</span><b class="dd">Importada</b></div>
                <div><span>Tipo de Movimiento</span><b class="dd"></b></div>
                <div><span>Tipo de Provision</span><b class="dd">FACTURA OTROS SERVICIOS</b></div>
                <div><span>Doc origen DT</span><b></b></div>
                <div class="tall"><span>Nro Orden de Compra SBO</span><b></b></div>
                <div><span>On Line</span><b class="dd">SI</b></div>
                <div class="tall"><span>Nro Factura SBO</span><b></b></div>
                <div class="tall"><span>Embarcador</span><b></b></div>
                <div><span>Fecha Llegada a Puerto</span><b></b></div>
                <div class="tall"><span>Status de Importacion</span><b></b></div>
                <div class="tall"><span>Nro Carpeta Importacion</span><b></b></div>
                <div><span>Certificado de Inscripcion</span><b></b></div>
                <div><span>Monto de Caja Chica</span><b>0,0000</b></div>
                <div><span>Saldo de Caja Chica</span><b>0,0000</b></div>
                <div><span>Tipo Transaccion</span><b></b></div>
                <div><span>SYP_ADDON_ANUL</span><b class="dd">NO</b></div>
                <div class="tall"><span>Nro de Cotizacion SBO</span><b></b></div>
                <div class="tall"><span>Nro Pedido SBO</span><b></b></div>
                <div><span>Nro. OC Cliente</span><b></b></div>
                <div><span>Terminos Importacion</span><b class="dd"></b></div>
                <div><span>Cod. Cliente</span><b></b></div>
                <div class="tall"><span>Nombre Cliente</span><b></b></div>
                <div><span>Motivo de Compra</span><b class="dd">IMPORTACIONES</b></div>
                <div class="last"><span>Descripcion Doc.</span><b>Liquidacion de Compra de Bienes</b></div>
              </div>
              <div class="svs bb"><em>▲</em><b>⠿</b><em>▼</em></div>
            </div>
          </div>
          <div class="sapfoot"><i></i><span>30/03/2017</span><i></i><i></i></div>
          <div class="redbar">ón en Detalle</div>
          <div class="sapend"></div>
        </div>
      </div>
      <footer class="status s2"><span>distr.png</span><i class="pa l"></i><i class="pa r"></i><span>Zoom:</span><svg><use href="#zm"/></svg><div class="slider"></div></footer>
      <div class="taskbar n">
        <i class="edge"></i>
        <div class="apps"><b class="no"><svg><use href="#ie"/></svg></b><b class="st"><svg><use href="#outlook"/></svg></b><b><svg><use href="#chrome"/></svg></b><b><svg><use href="#notes"/></svg></b><b><svg><use href="#tm"/></svg></b><b><svg><use href="#rdp"/></svg></b><b class="st lit"><svg><use href="#app"/></svg></b><b><svg><use href="#disc"/></svg></b></div>
        <div class="tray"><i class="dots"></i><span>ES</span><em>▲</em><svg><use href="#vol"/></svg><svg><use href="#bat"/></svg><svg><use href="#net"/></svg><p>11:48<br>30/03/2017</p><i class="peek"></i></div>
      </div>
      <div class="tip">^F3E14DBCDBDAF8E0585EC<br>891AA18AF458199DDF74A22<br>61CDAA^pimgpsh_fullsize_d<br>istr.png<br>Tipo: Imagen PNG<br>Tamaño: 89,5 KB<br>Dimensión: 1366 x 728<br>píxeles</div>
      <div class="toast"><div class="th2">skype</div><div class="tb2"><i>✓</i><p>Franklin Aguas<br><span>osea pensamos que hiciste en el dim...</span></p></div></div>
    </section>
    <i class="cyan"></i>
    <section class="inv">
      <div class="invtools"><svg><use href="#prev"/></svg><svg><use href="#gpr"/></svg><svg><use href="#env"/></svg><svg><use href="#sms"/></svg><svg><use href="#fax"/></svg><svg><use href="#gx"/></svg><svg><use href="#gw"/></svg><svg><use href="#gp"/></svg><svg><use href="#move"/></svg><svg><use href="#lock"/></svg><svg><use href="#bino"/></svg><svg><use href="#form"/></svg><svg><use href="#gf"/></svg><svg><use href="#ga"/></svg><svg><use href="#gb"/></svg><svg><use href="#gl"/></svg><svg><use href="#loop"/></svg></div>
      <div class="invwin">
        <h3>Factura de proveedores</h3>
        <div class="invform">
          <div class="f"><span>Proveedor</span><b></b></div>
          <div class="f"><span>Nombre</span><b></b></div>
          <div class="f"><span>Persona de contacto</span><b class="dd"></b><i class="inf"></i></div>
          <div class="f"><span>Número de referencia d</span><b></b></div>
          <b class="mon dd">Moneda local</b>
        </div>
        <div class="itabs"><span class="on">Contenido</span><span>Log<u>í</u>stica</span><span>Finan<u>z</u>as</span></div>
        <div class="ipanel">
          <div class="icl"><span>Clase de artículo/ser</span><b class="dd">Servicio</b></div>
          <div class="igrid">
            <div class="ih"><span>Carpeta de Importacion</span><span>Concepto de Gasto</span><span>Cuenta de mayor</span><span>Sujeto a re</span></div>
            <div><span></span><span></span><span></span><span>No</span></div><div><span></span><span></span><span></span><span></span></div><div><span></span><span></span><span></span><span></span></div><div><span></span><span></span><span></span><span></span></div><div><span></span><span></span><span></span><span></span></div><div><span></span><span></span><span></span><span></span></div><div><span></span><span></span><span></span><span></span></div><div><span></span><span></span><span></span><span></span></div>
            <p><em>◀</em><b>⠿</b></p>
          </div>
        </div>
        <div class="ilow">
          <div class="f"><span>Encargado de compras</span><b class="dd"></b><i class="inf"></i></div>
          <div class="f"><span>Titular</span><b></b></div>
          <p>Ejecución de orden de pago</p>
          <div class="f com"><span>Comentarios</span><b></b></div>
          <div class="ibt"><b class="def">Buscar</b><b>Cancelar</b></div>
        </div>
      </div>
    </section>
    <div class="bvs"><em>▲</em><b><i></i></b><em>▼</em></div>
  </div>
  <div class="bhs"><em>◀</em><b><i></i></b><em>▶</em><i class="rz"></i></div>
  <footer class="status s3"><span>i770^cimgpsh_orig.png</span><i class="pa l"></i><i class="pa r"></i><span>Zoom:</span><svg><use href="#zm"/></svg><div class="slider"><b></b></div><svg><use href="#zp"/></svg></footer>
</div>
</body>
</html>
```

FILE: styles.css
```css
*{box-sizing:border-box}
body{margin:0;width:2806px;height:900px;display:flex;background:#000;overflow:hidden;font:12px/16px "Open Sans","Noto Sans",sans-serif;letter-spacing:-.25px;color:#000;white-space:nowrap}
i,em{font-style:normal}
b{font-weight:400}
p,h3,h4{margin:0}
.defs{position:absolute}
svg{display:block}
.screen{display:flex;flex-direction:column;height:900px;overflow:hidden}
.one{width:1366px}
.two{width:1440px}

/* window frame */
.title{height:22px;flex:none;display:flex;align-items:flex-start;border-bottom:1px solid #3d5066;box-shadow:inset 0 1px #9fc0de}
.t1{background:linear-gradient(180deg,rgba(255,255,255,.1),rgba(70,110,150,.25)),linear-gradient(90deg,#b9cbdd 0,#aebfd2 130px,#8ca9c6 220px,#7ea6cc 300px,#5b88bb 380px,#8dbce2 440px,#7fb0dc 520px,#4f7fb0 560px,#9ac4e6 620px,#62b5de 690px,#86b4dc 780px,#456f9d 822px,#76a6d3 860px,#8ebce2 960px,#5b87b5 985px,#a5d4f2 1010px,#a7d6f3 1130px,#4a72ae 1150px,#5d86b8 1200px,#7c9cbc 1250px,#6c87a5 1366px)}
.t2{background:linear-gradient(90deg,rgba(190,215,230,.9) 0,rgba(180,210,228,.75) 120px,transparent 220px),linear-gradient(180deg,#3c5a6e 0,#6fc3ea 4px,#67b4da 8px,#5f7d92 12px,#7c8a98 21px)}
.s16{width:16px;height:16px;margin-top:3px}
.title>span{margin:3px 0 0 5px;letter-spacing:-.35px}
.wbtns{margin-left:auto;margin-right:3px;height:18px;display:grid;grid-template-columns:28px 27px 47px;border:1px solid #384859;border-top:0;border-radius:0 0 4px 4px;overflow:hidden;background:linear-gradient(#a9b7c6,#71859b 50%,#8ea0b3)}
.wbtns i{border-right:1px solid #4c5d70;display:grid;place-items:center;color:#fff}
.wbtns .cl{border:0;font:bold 14px/14px "Open Sans",sans-serif;text-shadow:0 0 2px #222}
.red .cl{background:linear-gradient(#dfa39b,#c4543f 45%,#a92a14 50%,#d26a4c)}
.mn::before{content:"";width:11px;height:4px;margin-top:5px;background:#fff;border:1px solid #505a66}
.mx::before{content:"";width:9px;height:9px;border:3px solid #fff;outline:1px solid #505a66;background:#505a66}
.t2 .wbtns{background:rgba(90,130,160,.6)}

/* menu and toolbars */
.menu{height:27px;flex:none;background:#bfdbff;display:grid;grid-template-columns:12px 57px 55px 33px 56px 87px 1fr auto;align-items:center;padding-left:6px}
.menu>span{letter-spacing:-.35px}
.ask{width:178px;height:20px;margin:0 3px 2px 0;background:#fff;display:flex;justify-content:space-between;color:#7b7b7b;padding-left:3px;letter-spacing:-.1px}
.ask span{line-height:18px;font-size:11.500px}
.ask b{width:11px;margin:1px 1px 1px 0;background:#bfdbff;display:grid;place-items:center}
.ask b::before,.zoombox b::before{content:"";width:0;border:3px solid transparent;border-top-color:#000;border-bottom:0}
.grip{width:2px;height:15px;background:repeating-linear-gradient(#6f9ad0 0 2px,transparent 2px 4px)}
.bars{height:25px;flex:none;background:#bfdbff;display:flex;gap:3px;padding-left:4px;align-items:flex-start}
.bar{height:25px;display:grid;align-items:center;background:linear-gradient(#bbcee6,#adc0d8);border-bottom:1px solid #6f9dd9;border-radius:3px}
.bar svg{width:16px;height:16px}
.bar span{color:#24415f}
.bar .sep{width:1px;height:15px;background:#eaf2fc;box-shadow:-1px 0 #9db4d0}
.a{grid-template-columns:7px 19px 107px 7px 22px 23px 23px 8px 21px 23px 24px 22px 8px 22px 22px 4px 61px 23px 11px;width:459px;padding-left:2px}
.b{grid-template-columns:5px 24px 23px 6px 19px 104px 5px 19px 91px 10px;width:310px;padding-left:4px}
.bar.b>span,.bar.a>span{letter-spacing:-.2px}
.bar.b>span:nth-child(9){letter-spacing:-.25px}
.bar .hp{width:17px;height:17px}
.end{align-self:stretch;background:linear-gradient(#cfe2fb,#6d9bd8);border-radius:0 3px 3px 0;display:flex;flex-direction:column;align-items:center;justify-content:flex-end;gap:1px;padding-bottom:3px}
.end::before{content:"";width:5px;height:1px;background:#fff}
.end::after{content:"";width:0;border:3px solid transparent;border-top-color:#111;border-bottom:0}
.zoombox{width:57px;height:20px;background:#fff;display:flex;justify-content:space-between}
.zoombox span{color:#000;margin-left:3px;line-height:18px;letter-spacing:-.4px}
.zoombox b{width:11px;background:#b5c9e2;display:grid;place-items:center}
.views{height:25px;flex:none;background:linear-gradient(#bccee5,#afc2da);border-bottom:1px solid #6f9dd9;display:flex;align-items:center;padding-left:3px;gap:6px}
.views svg{width:16px;height:15px}
.views b{width:21px;height:22px;background:#ffb85c;border:1px solid #f08a1d;padding:2px;margin-left:-2px}

/* DIMM window */
.canvas{height:604px;flex:none;background:#ece9d8;padding:1px 0 0 118px}
.dimm{width:1130px;height:603px;background:#f0f0f0;display:flex;flex-direction:column;font-size:9.800px;line-height:12px;letter-spacing:-.2px}
.dtitle{height:18px;flex:none;display:flex;align-items:center;background:linear-gradient(90deg,rgba(205,218,228,.9) 0,rgba(190,205,218,.7) 80px,transparent 170px),linear-gradient(180deg,#35587c,#5f7d98 40%,#6a7b8c);border-bottom:1px solid #485868}
.sri{display:inline-block;width:15px;font:italic bold 9px/11px "Liberation Sans",sans-serif;color:#1d2b78;background:#dfe3ee;letter-spacing:-.7px;text-align:center;flex:none}
.dtitle .sri{width:10px;font-size:6px;margin:0 5px 0 2px}
.small{height:15px;align-self:flex-start;grid-template-columns:23px 22px 39px;margin-right:2px;border-color:#777}
.small .cl{font-size:10px}
.small .mx::before{width:7px;height:7px;border-width:2px}
.dmenu{height:16px;flex:none;display:grid;grid-template-columns:45px 55px 39px 94px 41px 61px 58px 58px 89px 90px;padding-left:6px;align-items:center;background:linear-gradient(#fdfdff,#dfe5f2 60%,#e9edf7)}
.dbody{height:547px;flex:none;margin:4px 3px 0 4px;border:1px solid #a5acb8;border-radius:3px 4px 0 0;display:flex;flex-direction:column}
.dtabs{height:19px;flex:none;display:flex}
.dtabs div{display:flex;align-items:center;border-right:1px solid #b9bcc2;padding-left:4px;gap:4px}
.dtabs div:nth-child(1){width:171px;padding-left:2px;background:linear-gradient(#b9d0e8,#99b4d1)}
.dtabs div:nth-child(2){width:173px}
.dtabs div:nth-child(3){width:113px}
.dtabs em{color:#667;margin-left:2px}
.dtabs p{margin-left:auto;display:flex;gap:6px;padding:4px 5px}
.dtabs p i{width:8px;height:4px;border:1px solid #666;background:#fff}
.dtabs p i+i{height:9px;border-top-width:2px}
.dinner{flex:1;border:2px solid #99b4d1;border-top-width:3px;background:#fff;display:flex;flex-direction:column}
.dhead{height:27px;flex:none;display:grid;grid-template-columns:71px 124px 1fr auto;align-items:center;padding:0 9px 0 4px;border-bottom:1px solid #c6d3e3;background:linear-gradient(#fff,#e3eaf5);font:15px/18px "Liberation Sans",sans-serif;color:#21507f;letter-spacing:-.1px}
.dhead span{font-size:14.500px}
.dhead em{font:9.800px/12px "Open Sans",sans-serif;letter-spacing:-.2px;color:#000;margin-top:6px}
.dscroll{height:474px;flex:none;display:flex}
.dmain{flex:1;padding-left:15px;min-width:0}
.tools1{height:29px;display:grid;grid-template-columns:41px 37px 11px 506px 111px 109px 22px;padding-left:5px;align-items:center}
.tools1 i{width:0;border:3px solid transparent;border-top:4px solid #222;border-bottom:0}
.fin{height:17px;width:104px;border:1px solid #c9ccd6;border-top-color:#9da1aa}
.fbt{width:22px;height:20px;border:1px solid #777;border-radius:2px;background:linear-gradient(#f5f5f5,#cfcfcf);padding:2px}
.tbl{border:1px solid #9ba0a8;background:#fff;display:flex;flex-direction:column}
.tbl .th,.tbl .tr{display:grid;flex:none}
.tbl span{padding-left:5px;border-right:1px solid #e7eef6}
.th{height:20px;line-height:21px;background:linear-gradient(#fff 45%,#f3f4f6 50%,#eef0f3);border-bottom:1px solid #d9d9dc}
.th span{border-color:#dfe1e6}
.tr{height:16px;line-height:15px}
.tbl .fill{flex:1}
.k1{width:886px;height:213px}
.k1 .th,.k1 .tr{grid-template-columns:125px 99px 125px 82px 83px 65px 107px 99px 83px 1fr}
.k1 .sel{width:868px;margin:1px 0 0 1px;background:linear-gradient(#f6f6f6,#e3e3e3);border:1px solid #dadada;border-radius:2px;line-height:14px}
.tbl .sel span{border:0;padding-left:4px}
.total{height:22px;padding:5px 0 0 5px}
.split{display:grid;grid-template-columns:507px 1fr}
.split h4{font-size:9.800px;line-height:12px;padding:10px 0 0 1px;letter-spacing:-.45px;height:24px}
.split .dim{color:#a0a0a0;padding-left:0}
.tools2{display:grid;grid-template-columns:37px 35px 60px;padding:12px 0 0 5px;height:31px}
.k2{width:498px;height:151px}
.k2 .th,.k2 .tr{grid-template-columns:84px 149px 82px 83px 83px 1fr}
.sel2{background:linear-gradient(#fbfdff,#ebf4fd);border:1px solid #cfe3f7;width:480px;line-height:14px}
.lines{background:repeating-linear-gradient(#fff 0 14.600px,#eef0f2 14.600px 15.600px)}
.colR{padding-left:1px}
.treem{display:grid;grid-template-columns:120px 50px;padding-top:8px;height:22px}
.tools2.r{height:26px;padding:7px 0 0 4px}
.k3{width:388px;height:134px;background:#f0f0f0}
.k3 .th,.k3 .tr{grid-template-columns:83px 124px 83px 83px 1fr}
.vs{width:13px;background:#f1f1f1;display:flex;flex-direction:column;align-items:center;font-size:5px}
.vs em{height:15px;line-height:15px;color:#444}
.vs b{width:12px;margin-top:43px;height:401px;border:1px solid #979797;border-radius:1px;background:linear-gradient(90deg,#f4f4f4,#dcdcdc 50%,#c4c4c4);display:grid;place-items:center}
.vs b i,.bvs b i{width:6px;height:8px;background:repeating-linear-gradient(#555 0 1px,#eee 1px 3px)}
.btabs{height:16px;flex:none;display:grid;grid-template-columns:46px 36px 189px 115px;background:#f0f0f0;border-top:1px solid #9a9a9a;line-height:15px;letter-spacing:-.28px}
.btabs span{padding-left:3px;border-right:1px solid #b5b5b5}
.btabs .on{background:#fff;margin-top:-1px}
.dstat{flex:1;display:flex;padding:3px 0 0 6px}
.dstat span{width:881px}
.dstat i{width:1px;height:14px;background:repeating-linear-gradient(#aaa 0 2px,transparent 2px 4px)}

/* viewer status bar */
.status{height:26px;flex:none;background:linear-gradient(#bccfe6,#adc0d8);border-bottom:2px solid #6f9dd9;display:grid;align-items:center;font:11px/14px "DejaVu Sans Condensed","DejaVu Sans",sans-serif;font-stretch:condensed;letter-spacing:-.2px}
.status svg{width:15px;height:15px}
.s1{grid-template-columns:644px 22px 331px 38px 22px 243px 15px;padding-left:25px}
.pa{border:5px solid transparent;width:0;height:0}
.pa.l{border-right:6px solid #1e5bd8;border-left:0}
.pa.r{border-left:6px solid #1e5bd8;border-right:0}
.slider{width:235px;height:4px;background:#f4f6f9;border-top:1px solid #7d8fa8;position:relative}
.slider b{position:absolute;left:102px;top:-8px;width:8px;height:15px;background:linear-gradient(90deg,#fff,#c9ced6);border:1px solid #5b6472;border-radius:1px 1px 4px 4px}

/* taskbar */
.taskbar{height:39px;flex:none;display:flex;color:#fff;background:linear-gradient(180deg,rgba(255,255,255,.18),rgba(0,0,0,0) 6px),linear-gradient(90deg,#26303b 0,#1c2835 20%,#1b2535 45%,#24447a 62%,#1c3564 72%,#101d33 78%,#18293f 100%);border-top:1px solid #5f7690}
.start{width:324px;display:grid;grid-template-columns:77px 57px 63px 60px 40px;padding-left:7px;align-items:center}
.start svg+svg{width:32px;height:31px}
.start svg:nth-child(2){margin-left:5px}
.start svg:nth-child(3){margin-left:10px}
.start svg:nth-child(4){margin-left:9px}
.start svg:nth-child(5){margin-left:10px;width:30px;height:26px}
.apps{display:grid;grid-template-columns:62px 62px 62px 61px 63px 62px 62px 62px 62px 58px;align-items:center;padding-top:1px}
.apps b{height:37px;width:58px;border:1px solid #8692a3;border-radius:3px;background:linear-gradient(150deg,rgba(255,255,255,.45),rgba(120,135,155,.4) 50%,rgba(70,85,110,.45));display:grid;place-items:center}
.apps svg{width:30px;height:30px}
.apps .no{background:none;border:0}
.apps .st{width:50px;box-shadow:3px 0 0 -1px #4c5a70,5px 0 0 -1px #96a1b0,7px 0 0 -1px #3c495e}
.apps .lit{background:linear-gradient(#e8eaee,#b3bac6)}
.tray{margin-left:auto;display:grid;grid-template-columns:18px 34px 20px 28px 25px 25px 68px 16px;align-items:center}
.tray span{font-size:11.500px;padding-bottom:4px}
.tray em{font-size:9px}
.tray svg{width:14px;height:15px}
.tray p{text-align:center;line-height:17px;padding-right:4px;letter-spacing:-.35px}
.dots{width:8px;height:30px;background:radial-gradient(circle at 1px 1px,#7b8799 .8px,transparent 1px) 0 0/3px 4px}
.peek{height:37px;width:14px;border:1px solid #6b7788;background:linear-gradient(#4d5b70,#202d42)}

/* second screen */
.viewer{height:759px;flex:none;display:grid;grid-template-columns:925px 6px 493px 16px}
.shot{position:relative;overflow:hidden;background:#ece9d8;display:flex;flex-direction:column}
.strip{height:34px;flex:none;background:#bfdbff;display:flex;gap:4px;padding-top:9px;position:relative}
.c{width:21px;display:flex;justify-content:space-between}
.c .end{width:10px}
.halfhelp{width:5px;height:16px;border-radius:0 9px 9px 0;background:#4480c8}
.askcut{position:absolute;right:3px;top:0;width:178px;height:5px;background:#fff;padding-left:166px}
.askcut b{display:block;width:10px;height:4px;background:#bfdbff}
.sapwrap{height:603px;flex:none}
.sap{width:808px;height:603px;display:flex;flex-direction:column;border-top:7px solid #3c5c7e;border-right:3px solid #4a7db3;background:#fbfbfb;font:10px/12px "DejaVu Sans Condensed","DejaVu Sans",sans-serif;font-stretch:condensed;letter-spacing:-.35px;color:#222}
.sap svg{flex:none}
.sapmenu{height:26px;flex:none;background:linear-gradient(#7b7b78,#5a5658);border-bottom:3px solid #ffb50f;display:grid;grid-template-columns:31px 47px 1fr auto;color:#f2f2f2;align-items:center;padding-right:10px}
.sapmenu .sq{gap:4px}
.sq{display:flex;gap:3px}
.sq i{width:14px;height:14px;border:1px solid #888;background:#f8f8f8;color:#666;font:bold 10px/11px "DejaVu Sans",sans-serif;text-align:center}
.dark i{width:13px;height:13px;color:#333}
.saptools{height:41px;flex:none;background:#fff;border-bottom:3px solid #c0c0c0;padding-top:4px;display:grid;grid-template-columns:13px 24px 22px 24px 25px 24px 29px 26px 24px 24px 24px 24px 24px 31px 24px 24px 32px 24px 24px 24px 31px 32px 25px 17px;align-items:center}
.saptools svg{width:17px;height:17px}
.saptools svg:first-child{margin-left:-9px}
.saptools svg:nth-child(2),.saptools svg:nth-child(3){width:14px;height:14px}
.desk{height:486px;flex:none;position:relative}
.ghost{position:absolute;left:0;top:0;width:96px;height:18px;border-right:2px solid #bbb;padding:2px 0 0 39px;opacity:.7}
.find{position:absolute;left:454px;top:8px;height:18px;display:flex}
.find i{width:27px;height:9px;border:1px solid #999;background:linear-gradient(90deg,transparent 3px,#888 3px 13px,transparent 13px)}
.find span{width:233px;margin-left:3px;background:#ffec95;border:1px solid #c9bd86;font-style:italic;color:#b5a873;padding-left:3px}
.find b{width:48px;margin-left:3px;background:#b5b5b5;color:#fff;font-weight:700;text-align:center;line-height:18px}
.win{position:absolute;top:17px;height:468px;background:#f7f7f7;border:1px solid #b5b5b5;border-top:2px solid #bbb}
.w1{left:0;width:344px;border-left:0;padding:2px 3px 0 0;box-shadow:inset -2px 0 #fff}
.wt{height:21px;background:linear-gradient(#b7b7b7,#8e8e8e);border-bottom:3px solid #ffb50f;display:flex;justify-content:flex-end;padding:2px 4px 0}
.wb{display:flex;height:438px}
.wmain{width:323px;flex:none}
.wtabs{height:43px;padding-top:29px;display:grid;grid-template-columns:58px 111px}
.wtabs span{height:14px;line-height:14px;background:linear-gradient(#e2e2e2,#bdbdbd);border:1px solid #999;border-bottom:0;border-radius:0 3px 0 0;border-left:0;padding-left:1px}
.wtabs span+span{text-align:center;padding-left:6px}
.wpanel{width:308px;height:198px;border:1px solid #999;border-left:0}
.clase{display:grid;grid-template-columns:99px 113px;padding:10px 0 0 90px;height:25px}
.clase span{border-bottom:1px solid #d8d8d8}
.dd{position:relative;background:#fff}
.dd::after,.ddn::after{content:"";position:absolute;right:3px;top:50%;margin-top:-2px;border:3px solid transparent;border-top:5px solid #222;border-bottom:0}
.clase b{height:12px;border:1px solid #aaa;line-height:11px;padding-left:1px}
.gridrow{display:flex;align-items:flex-start}
.gt{width:291px;border-right:1px solid #bbb}
.gh,.gr{display:grid;grid-template-columns:48px 57px 131px 55px}
.gh{height:18px;line-height:17px;background:#e3e3e3;color:#444;letter-spacing:-.55px}
.gh span{padding-left:3px;border-right:1px solid #ccc}
.gh span:first-child,.gr span:first-child{padding-left:0}
.gr span{height:14px;line-height:13px;border-right:1px solid #ccc;border-bottom:1px solid #ccc;background:#fff;padding-left:1px;position:relative;display:flex;gap:3px;align-items:center}
.gr span:first-child{background:#e3e3e3;letter-spacing:-.75px}
.gr svg,.totals svg{width:11px;height:9px}
.gr .rt{justify-content:flex-end;letter-spacing:-.55px;padding-right:2px}
.gs{height:15px;border-bottom:1px solid #999;display:flex;justify-content:flex-end}
.gs b,.gvs b{width:13px;height:13px;background:#ddd;font-size:7px;line-height:13px;text-align:center;color:#333}
.gvs{width:15px;height:112px;margin-top:18px;background:#ececec;border:1px solid #bbb;display:flex;flex-direction:column;justify-content:space-between}
.gvs b{color:#aaa}
.totals{margin:4px 0 0 84px;width:223px}
.totals div{height:13.400px;display:grid;grid-template-columns:104px 119px;position:relative}
.totals span{border-bottom:1px solid #d9dde2;display:flex;align-items:center;height:13px;gap:4px;letter-spacing:-.5px}
.totals span svg{margin-left:auto}
.totals b{grid-column:2;height:13px;border:1px solid #b8b8b8;background:#e5e5e5;text-align:right;line-height:11px}
.totals b.w{background:#fff}
.pct{width:30px;height:12px;border:1px solid #aaa;background:#fff;margin-left:12px}
.cb{width:10px;height:10px;border:1px solid #888;background:#fff}
.more{position:absolute;left:-20px;top:1px;width:18px;height:12px;background:#f7d76c;border:1px solid #777;line-height:7px;text-align:center}
.wbt{display:flex;gap:4px;margin:30px 0 0 129px}
.wbt b{width:87px;height:18px;border:1px solid #777;background:linear-gradient(#f9e9a8,#f2cf5c);text-align:center;line-height:16px;padding-right:12px;position:relative}
.wbt b i{position:absolute;right:3px;bottom:3px;border:2px solid #333;border-top-color:transparent;border-left-color:transparent}
.wbt .off{background:#e9e9e9;border-color:#ccc;color:#999}
.svs{width:14px;border:1px solid #ccc;background:#f3f3f3;display:flex;flex-direction:column;justify-content:space-between;font-size:8px;text-align:center}
.svs em{height:13px;background:#dcdcdc;line-height:12px;color:#555}
.svs b{border:1px solid #aaa;background:#dcdcdc;display:grid;place-items:center;color:#bbb}
.svs.a b{height:332px;margin-top:76px}
.svs.bb{height:456px;margin-left:6px}
.svs.bb b{height:82px;margin-bottom:160px}
.w2{left:345px;width:326px;border-width:2px;border-color:#aaa;display:flex;padding:1px 0 0 6px}
.udf{width:290px;height:460px}
.udf div{height:14px;display:grid;grid-template-columns:150px 139px;align-items:start}
.udf span{height:12px;border-bottom:1px solid #dde3ea;line-height:12px}
.udf b{height:12px;border:1px solid #aaa;background:#fff;line-height:11px;padding-left:1px;letter-spacing:-.5px}
.udf .tall{height:26.600px}
.udf .tall span,.udf .tall b{height:24px}
.udf .first{height:13px;padding-top:0;margin-bottom:-1px}
.udf .first span,.udf .first b{height:10px;line-height:9px}
.udf .first b{border-top:0}
.udf .last b{border-bottom:0}
.sapfoot{height:24px;flex:none;background:#f3f3f3;border-top:3px solid #ccc;display:grid;grid-template-columns:156px 74px 234px 4px 1fr;align-items:center}
.sapfoot i{height:12px;border:1px solid #bbb;background:#e4e4e4;border-radius:2px}
.sapfoot i:last-child{grid-column:5}
.sapfoot span{padding:0 0 5px 12px}
.redbar{height:12px;flex:none;background:#d00000;color:#fff;line-height:12px;padding-left:1px}
.sapend{flex:1;background:linear-gradient(#fff 3px,#3d78ad 3px)}
.s2{grid-template-columns:229px 22px 331px 36px 23px 100px}
.n .apps{grid-template-columns:63px 62px 62px 62px 62px 62px 62px 58px}
.n .edge{width:3px;background:#e8a34a;margin-right:3px}
.viewer .taskbar{height:40px}
.shot::after{content:"";flex:1;background:#000}
.cyan{background:#5fc8f0}
.tip{position:absolute;left:750px;top:463px;width:162px;height:125px;border:1px solid #767676;border-radius:2px;background:linear-gradient(#fff,#e4e5f0);box-shadow:2px 2px 2px rgba(0,0,0,.5);color:#575757;line-height:15px;padding:2px 5px;letter-spacing:-.55px}
.toast{position:absolute;left:681px;top:602px;width:239px;height:84px;background:#fff;border-bottom:5px solid #ff8c00;border-left:1px solid #bbb}
.th2{height:24px;background:#ff8c00;color:#fff;font:bold 14px/20px "Open Sans",sans-serif;letter-spacing:-1px;padding-left:4px}
.tb2{display:flex;gap:6px;padding:10px 8px}
.tb2 i{width:12px;height:12px;border-radius:50%;background:#6cb51c;color:#fff;font-size:9px;line-height:12px;text-align:center;margin-top:4px}
.tb2 p{font-size:12.500px;line-height:17px;color:#333}
.tb2 span{font-size:12px;color:#7a8494;letter-spacing:-.25px}

/* supplier invoice window */
.inv{background:#fff;border-left:1px solid #d8d4d8;overflow:hidden;font:12px/14px "DejaVu Sans Condensed","DejaVu Sans",sans-serif;font-stretch:condensed;letter-spacing:-.32px}
.invtools{height:45px;display:grid;grid-template-columns:30px 29px 29px 29px 29px 29px 29px 29px 29px 38px 29px 29px 30px 31px 25px 29px 20px;align-items:center;padding:5px 0 0 14px}
.invtools svg{width:20px;height:20px}
.invtools svg:nth-child(14),.invtools svg:nth-child(15){width:14px;height:15px}
.invwin{border-top:1px solid #ccc;border-left:2px solid #b9b4b9;height:714px;padding-top:2px;background:#f7f7f7}
.invwin h3{height:28px;background:linear-gradient(#bcb8ba,#8a8a8a);border-bottom:3px solid #ffb50f;font-weight:400;font-size:15px;line-height:29px;padding-left:9px;letter-spacing:-.55px}
.invform{padding:6px 0 0 11px;height:167px}
.f{height:17.300px;display:grid;grid-template-columns:146px 176px 18px}
.f span{border-bottom:1px solid #d3dae0;line-height:16px;height:17px;padding-left:1px}
.f b,.mon,.icl b{height:16px;background:#fffac8;border:1px solid #b3b3b3}
.invform .f span{width:144px}
.invform .f:nth-child(4) span{width:129px;border:0;letter-spacing:-.36px;overflow:hidden}
.inf{width:14px;height:14px;margin:1px 0 0 3px;border:1px solid #9db2cc;border-radius:5px;background:repeating-linear-gradient(#777 0 1px,#dbe7f6 1px 3px) center/5px 8px no-repeat #dbe7f6}
.mon{display:block;width:142px;line-height:14px;padding-left:1px}
.itabs{height:22px;padding-left:20px;display:grid;grid-template-columns:172px 163px 160px;align-items:end}
.itabs span{height:20px;line-height:20px;text-align:center;background:linear-gradient(#e6e2e4,#c4c2c3);border:1px solid #8f8f8f;border-left:0;border-radius:2px 2px 0 0}
.itabs span:last-child{padding-left:5px}
.itabs .on{height:23px;line-height:23px;background:#f7f5f7;border:1px solid #8f8f8f;border-bottom:0;margin-bottom:-1px;padding-left:8px;z-index:1}
.ipanel{margin-left:11px;height:256px;border:1px solid #8f8f8f;border-right:0}
.icl{display:grid;grid-template-columns:133px 176px;padding:12px 0 0 12px;height:33px}
.icl span{border-bottom:1px solid #d3dae0;height:17px;line-height:17px}
.icl b{width:176px;margin-left:-1px;height:17px;line-height:15px}
.igrid{margin-left:2px;border:1px solid #ccc;border-right:0;background:#e6e6e6}
.igrid div{display:grid;grid-template-columns:156px 133px 121px 80px;height:18px}
.igrid .ih{height:22px}
.igrid span{border-right:1px solid #ccc;border-bottom:1px solid #ccc;line-height:17px;padding-left:1px}
.igrid .ih span{padding-left:3px;color:#333;line-height:18px}
.igrid p{height:20px;display:grid;grid-template-columns:18px 1fr;border-bottom:1px solid #aaa}
.igrid em{font-size:8px;line-height:19px;padding-left:4px;background:#f1f1f1}
.igrid p b{border:1px solid #aaa;background:#e5e0e4;display:grid;place-items:center;font-size:9px;color:#bbb;padding-left:120px}
.ilow{padding:1px 0 0 9px}
.ilow .f{grid-template-columns:147px 175px 18px;height:19px}
.ilow p{color:#888;margin:70px 0 20px 21px;line-height:14px}
.ilow .com{height:75px}
.ilow .com b{height:68px}
.ilow .com span{height:68px;line-height:20px}
.ibt{display:flex;gap:8px}
.ibt b{width:77px;height:19px;line-height:18px;border:1px solid #666;border-bottom:0;background:linear-gradient(#fdf2c6,#f3cd55);text-align:center}
.ibt .def{border-left:8px solid #f39a17}
.bvs{background:#f0f0f0;border-left:1px solid #ddd;display:flex;flex-direction:column;align-items:center;font-size:7px;color:#333}
.bvs em{height:16px;line-height:16px}
.bvs b{width:15px;height:607px;margin:35px 0 86px;border:1px solid #8f8f8f;border-radius:2px;background:linear-gradient(90deg,#f5f5f5,#dadada 50%,#c6c6c6);display:grid;place-items:center}
.bhs{height:16px;flex:none;background:#f0f0f0;display:grid;grid-template-columns:232px 701px 478px 1fr;align-items:center;font-size:8px;padding-left:4px;border-top:1px solid #ddd}
.bhs b{height:14px;border:1px solid #8f8f8f;border-radius:2px;background:linear-gradient(#f5f5f5,#dcdcdc 50%,#c6c6c6);display:grid;place-items:center}
.bhs b i{width:8px;height:7px;background:repeating-linear-gradient(90deg,#555 0 1px,#eee 1px 3px)}
.bhs em:nth-of-type(2){text-align:right}
.rz{width:9px;height:9px;margin-left:13px;background:radial-gradient(#aaa 1px,transparent 1px) 0 0/3px 3px}
.bhs,.s3{width:1440px}
.s3{grid-template-columns:684px 22px 366px 37px 24px 242px 15px;padding-left:24px}
.s3 .slider b{left:113px}
```
